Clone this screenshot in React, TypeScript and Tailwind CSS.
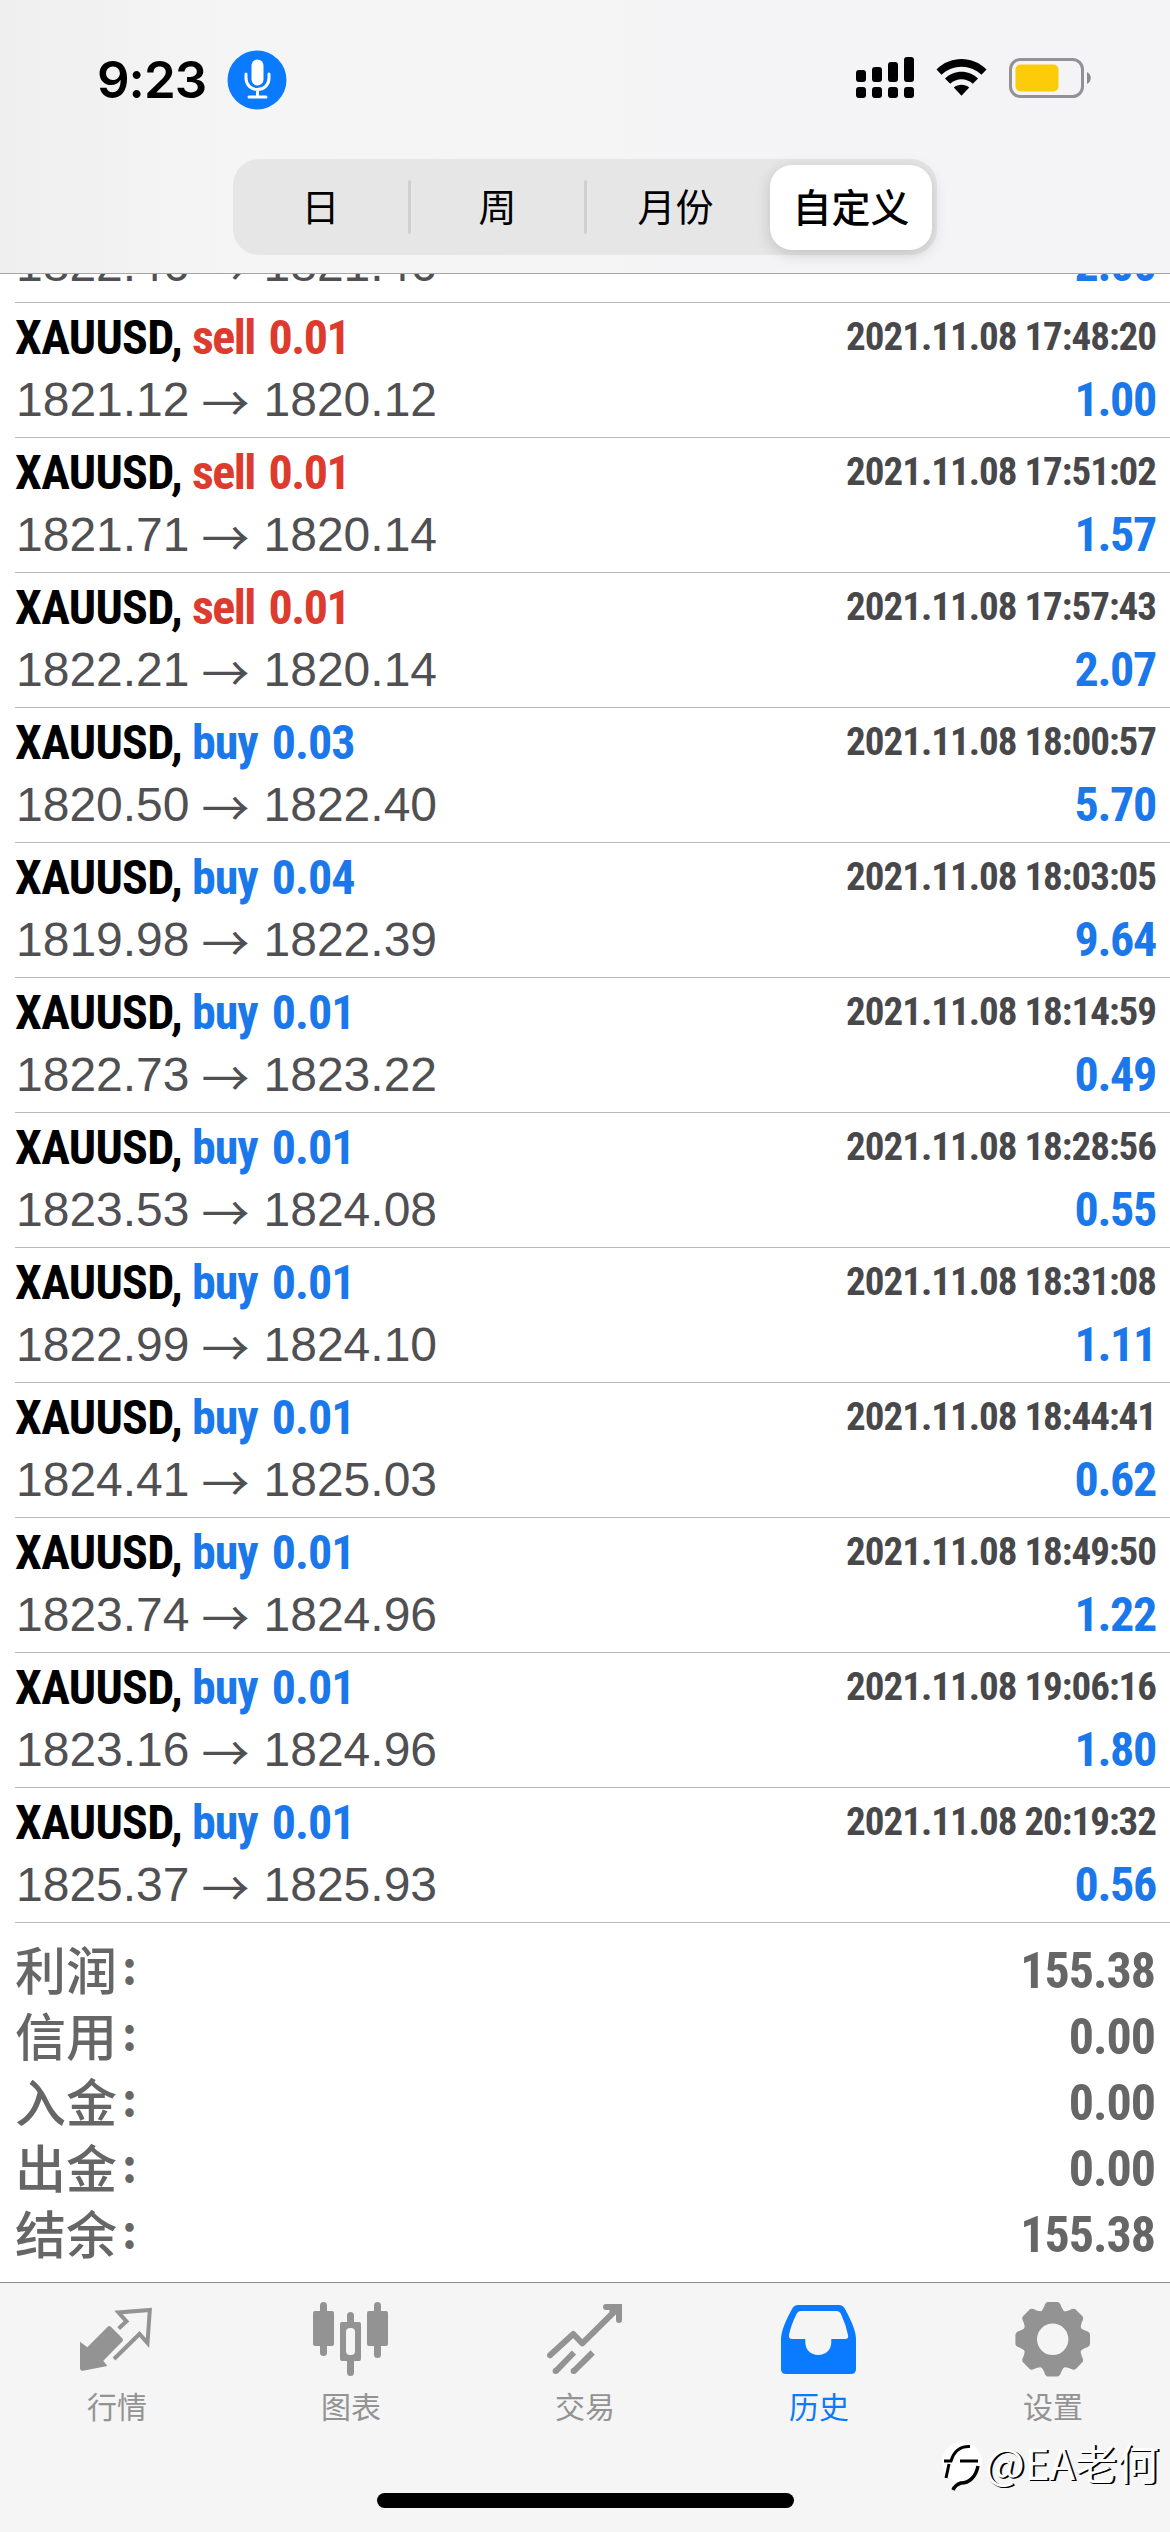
import type { ReactNode } from 'react';

type Deal = {
  side: 'buy' | 'sell';
  volume: string;
  open: string;
  close: string;
  time: string;
  profit: string;
};

const deals: Deal[] = [
  { side: 'sell', volume: '0.01', open: '1821.12', close: '1820.12', time: '2021.11.08 17:48:20', profit: '1.00' },
  { side: 'sell', volume: '0.01', open: '1821.71', close: '1820.14', time: '2021.11.08 17:51:02', profit: '1.57' },
  { side: 'sell', volume: '0.01', open: '1822.21', close: '1820.14', time: '2021.11.08 17:57:43', profit: '2.07' },
  { side: 'buy', volume: '0.03', open: '1820.50', close: '1822.40', time: '2021.11.08 18:00:57', profit: '5.70' },
  { side: 'buy', volume: '0.04', open: '1819.98', close: '1822.39', time: '2021.11.08 18:03:05', profit: '9.64' },
  { side: 'buy', volume: '0.01', open: '1822.73', close: '1823.22', time: '2021.11.08 18:14:59', profit: '0.49' },
  { side: 'buy', volume: '0.01', open: '1823.53', close: '1824.08', time: '2021.11.08 18:28:56', profit: '0.55' },
  { side: 'buy', volume: '0.01', open: '1822.99', close: '1824.10', time: '2021.11.08 18:31:08', profit: '1.11' },
  { side: 'buy', volume: '0.01', open: '1824.41', close: '1825.03', time: '2021.11.08 18:44:41', profit: '0.62' },
  { side: 'buy', volume: '0.01', open: '1823.74', close: '1824.96', time: '2021.11.08 18:49:50', profit: '1.22' },
  { side: 'buy', volume: '0.01', open: '1823.16', close: '1824.96', time: '2021.11.08 19:06:16', profit: '1.80' },
  { side: 'buy', volume: '0.01', open: '1825.37', close: '1825.93', time: '2021.11.08 20:19:32', profit: '0.56' },
];

const summary = [
  { label: '利润', value: '155.38' },
  { label: '信用', value: '0.00' },
  { label: '入金', value: '0.00' },
  { label: '出金', value: '0.00' },
  { label: '结余', value: '155.38' },
];

function StatusBar() {
  return (
    <div className="flex h-[159px] items-start justify-between pt-[50px] pr-[78px] pl-[97px]">
      <div className="flex items-center">
        <span className="w-[130px] font-[Inter,sans-serif] text-[51px] leading-[58px] font-semibold tracking-[-1px]">
          9:23
        </span>
        <svg width="60" height="60" viewBox="0 0 60 60" fill="none">
          <circle cx="30" cy="30" r="29.5" fill="#0a7aff" />
          <rect x="24.5" y="9.5" width="12" height="26" rx="6" fill="#fff" />
          <path d="M19 24v4c0 7 5 11.500 11.500 11.500S42 35 42 28v-4M30.500 39.500v7" stroke="#fff" strokeWidth="3" strokeLinecap="round" />
          <path d="M22 47h17" stroke="#fff" strokeWidth="3" strokeLinecap="round" />
        </svg>
      </div>
      <div className="flex items-start pt-[7px]">
        {/* dual sim signal */}
        <svg width="58" height="42" viewBox="0 0 58 42">
          <rect x="0" y="13" width="10" height="12" rx="3" />
          <rect x="16" y="10" width="10" height="15" rx="3" />
          <rect x="32" y="5" width="10" height="20" rx="3" />
          <rect x="48" y="0" width="10" height="25" rx="3" />
          <rect x="0" y="30" width="10" height="11" rx="3" />
          <rect x="16" y="30" width="10" height="11" rx="3" />
          <rect x="32" y="30" width="10" height="11" rx="3" />
          <rect x="48" y="30" width="10" height="11" rx="3" />
        </svg>
        <svg className="mt-[2px] ml-[22px]" width="51" height="38" viewBox="0 0 51 38">
          <path d="M0.500 10.500C14-3.500 37-3.500 50.500 10.500L45.500 15.800C34.500 5 16.500 5 5.500 15.800Z" />
          <path d="M9 19.500C18 10.500 33 10.500 42 19.500L36.800 24.800C30.500 18.800 20.500 18.800 14.200 24.800Z" />
          <path d="M17.800 28.500C22 24.700 29 24.700 33.200 28.500L25.500 36.800Z" />
        </svg>
        <svg className="ml-[22px]" width="83" height="42" viewBox="0 0 83 42">
          <rect x="1.500" y="2.500" width="72" height="37" rx="10" fill="none" stroke="#929296" strokeWidth="3" />
          <rect x="6.500" y="7.500" width="43" height="27" rx="5" fill="#fccb0a" />
          <path d="M78 15c5 2.500 5 9.500 0 12z" fill="#8a8a8e" />
        </svg>
      </div>
    </div>
  );
}

function PeriodPicker() {
  return (
    <div className="mx-auto flex h-[96px] w-[704px] items-center rounded-[26px] bg-[#e6e6e7] font-['Noto_Sans_CJK_SC',sans-serif] text-[38px] leading-[54px]">
      <div className="w-[175px] pb-1 text-center">日</div>
      <div className="h-[54px] w-[3px] rounded-full bg-[#cfcfd1]" />
      <div className="w-[173px] pb-1 text-center">周</div>
      <div className="h-[54px] w-[3px] rounded-full bg-[#cfcfd1]" />
      <div className="w-[183px] pr-[6px] pb-1 text-center">月份</div>
      <div className="flex h-[85px] w-[162px] items-center justify-center rounded-[22px] bg-white pb-1 text-[39px] font-medium shadow-[0_4px_16px_rgba(0,0,0,0.16)]">
        自定义
      </div>
    </div>
  );
}

function PriceLine({ open, close, profit }: { open: string; close: string; profit: string }) {
  return (
    <div className="flex h-[54px] justify-between text-[48px] leading-[54px]">
      <div className="flex pl-px font-['Liberation_Sans',sans-serif] text-[#505053]">
        <span>{open}</span>
        <span className="mr-[14px] ml-[12px] font-['Noto_Sans_CJK_SC',sans-serif]">→</span>
        <span>{close}</span>
      </div>
      <span className="font-['Roboto_Condensed',sans-serif] font-bold tracking-[-1.300px] text-[#1a78ea]">{profit}</span>
    </div>
  );
}

function DealRow({ deal }: { deal: Deal }) {
  return (
    <div className="ml-[15px] h-[135px] border-b border-[#b9b9bb] pr-[14px]">
      <div className="flex h-[70px] justify-between font-['Roboto_Condensed',sans-serif] font-bold">
        <div className="flex text-[48px] leading-[70px]">
          <span className="w-[177px] tracking-[-0.700px]">XAUUSD,</span>
          {deal.side === 'buy' ? (
            <span className="tracking-[-1px] text-[#1a78ea] [word-spacing:4px]">buy {deal.volume}</span>
          ) : (
            <span className="tracking-[-1.500px] text-[#dd3b2d] [word-spacing:4px]">sell {deal.volume}</span>
          )}
        </div>
        <span className="text-[39px] leading-[68px] tracking-[-1px] text-[#48484b]">{deal.time}</span>
      </div>
      <PriceLine open={deal.open} close={deal.close} profit={deal.profit} />
    </div>
  );
}

function Tab({ label, active, children }: { label: string; active?: boolean; children: ReactNode }) {
  return (
    <div className={`flex w-[234px] flex-col items-center ${active ? 'text-[#0a7aff]' : 'text-[#939393]'}`}>
      <svg width="76" height="78" viewBox="0 0 76 78" fill="none">
        {children}
      </svg>
      <span className="mt-[4px] font-['Noto_Sans_CJK_SC',sans-serif] text-[30px] leading-[44px]">{label}</span>
    </div>
  );
}

export default function App() {
  return (
    <div className="relative flex h-[2532px] w-[1170px] flex-col overflow-hidden bg-white text-black">
      <header className="h-[274px] shrink-0 border-b border-[#a6a6a8] bg-linear-to-r from-[#efefef] via-[#f5f5f5] via-20% to-[#f4f4f7]">
        <StatusBar />
        <PeriodPicker />
      </header>

      <main className="h-[2008px] shrink-0">
        {/* row scrolled under the header */}
        <div className="ml-[15px] flex h-[29px] flex-col justify-end overflow-hidden border-b border-[#b9b9bb] pr-[14px] pb-[10px]">
          <PriceLine open="1822.46" close="1821.46" profit="2.00" />
        </div>
        {deals.map((deal) => (
          <DealRow key={deal.time} deal={deal} />
        ))}
        <div className="flex flex-col px-[15px] pt-[14px] text-[#666]">
          {summary.map((item) => (
            <div key={item.label} className="flex h-[66px] justify-between">
              <div className="flex font-['Noto_Sans_CJK_SC',sans-serif] text-[51px] leading-[62px] font-medium">
                <span>{item.label}</span>
                <span className="pl-[5px] text-[46px] leading-[54px] font-bold">:</span>
              </div>
              <span className="font-['Roboto_Condensed',sans-serif] text-[50px] leading-[69px] font-bold tracking-[-1px]">
                {item.value}
              </span>
            </div>
          ))}
        </div>
      </main>

      <nav className="flex flex-1 border-t border-[#8e8e90] bg-[#f5f5f5] pt-[18px]">
        <Tab label="行情">
          <path d="M1 40.700L8.300 46.300L29 25.500Q30.300 24.300 31.600 25.500L43.500 37.500Q44.600 39 43.500 40.200L24.300 59.700L28.300 65L4 69.800Q1 70 1 67Z" fill="currentColor" />
          <path d="M39.700 27.500L47.500 20.300L39.500 11.500L70.800 9L68.500 42L60.500 33L35 58" stroke="currentColor" strokeWidth="4" />
        </Tab>
        <Tab label="图表">
          <rect x="7" y="1" width="7" height="54" rx="3.500" fill="currentColor" />
          <rect x="0" y="10" width="21" height="35" rx="2" fill="currentColor" />
          <rect x="34" y="11" width="7" height="64" rx="3.500" fill="currentColor" />
          <rect x="27" y="21" width="21" height="39" rx="2" fill="currentColor" />
          <rect x="33" y="27" width="9" height="27" rx="4" fill="#f5f5f5" />
          <rect x="61" y="1" width="7" height="56" rx="3.500" fill="currentColor" />
          <rect x="54" y="10" width="21" height="35" rx="2" fill="currentColor" />
        </Tab>
        <Tab label="交易">
          <path d="M3 54.300L26.300 33L35.300 42.300L71 7" stroke="currentColor" strokeWidth="6" strokeLinecap="round" strokeLinejoin="round" />
          <path d="M59 6H72V19" stroke="currentColor" strokeWidth="6" strokeLinecap="round" />
          <path d="M68 3H75V10L66 14L62 10Z" fill="currentColor" />
          <path d="M8.600 70.300L27 51.500M26.600 70.300L45.700 51.500" stroke="currentColor" strokeWidth="6" />
          <circle cx="8.600" cy="70" r="3" fill="currentColor" />
          <circle cx="26.600" cy="70" r="3" fill="currentColor" />
        </Tab>
        <Tab label="历史" active>
          <path
            fillRule="evenodd"
            d="M17 4H58Q62 4 64 8Q75 28 75 38V68Q75 73 70 73H5Q0 73 0 68V38Q0 28 11 8Q13 4 17 4ZM20 10Q17 10 15.500 13Q10 24 8 34Q7.500 38 11 38H24.300V41C24.300 49 30 54 37.300 54S50.300 49 50.300 41V38H64Q68 38 67 34Q65 24 60 13Q58.500 10 55.500 10Z"
            fill="currentColor"
          />
        </Tab>
        <Tab label="设置">
          {[0, 45, 90, 135, 180, 225, 270, 315].map((deg) => (
            <path
              key={deg}
              transform={`rotate(${deg} 37.700 38.300)`}
              d="M24 12Q27.500 10 29 6Q30.500 1 33 1H42.400Q45 1 46.400 6Q48 10 51.500 12L48 20H27Z"
              fill="currentColor"
            />
          ))}
          <circle cx="37.700" cy="38.300" r="22.200" stroke="currentColor" strokeWidth="13" />
        </Tab>
      </nav>

      {/* home indicator */}
      <div className="absolute bottom-[24px] left-[377px] h-[15px] w-[417px] rounded-full bg-black" />

      {/* watermark */}
      <div className="absolute right-[11px] bottom-[38px] flex items-center">
        <svg width="48" height="52" viewBox="0 0 48 52" fill="none">
          <circle cx="25" cy="22" r="20" fill="#fff" />
          <path d="M7 21H14C17 11 24 6 33 6.500M23 21H41M12 24L9 38" stroke="#000" strokeWidth="3" />
          <path d="M41 26C39 37 32 43 24 43Q18 45 16 50" stroke="#000" strokeWidth="3.500" />
        </svg>
        <span className="pb-[7px] font-['Noto_Sans_CJK_SC',sans-serif] text-[42px] leading-[50px] text-white [text-shadow:1px_1px_0_#000,2px_1px_0_#000]">
          @EA老何
        </span>
      </div>
    </div>
  );
}
